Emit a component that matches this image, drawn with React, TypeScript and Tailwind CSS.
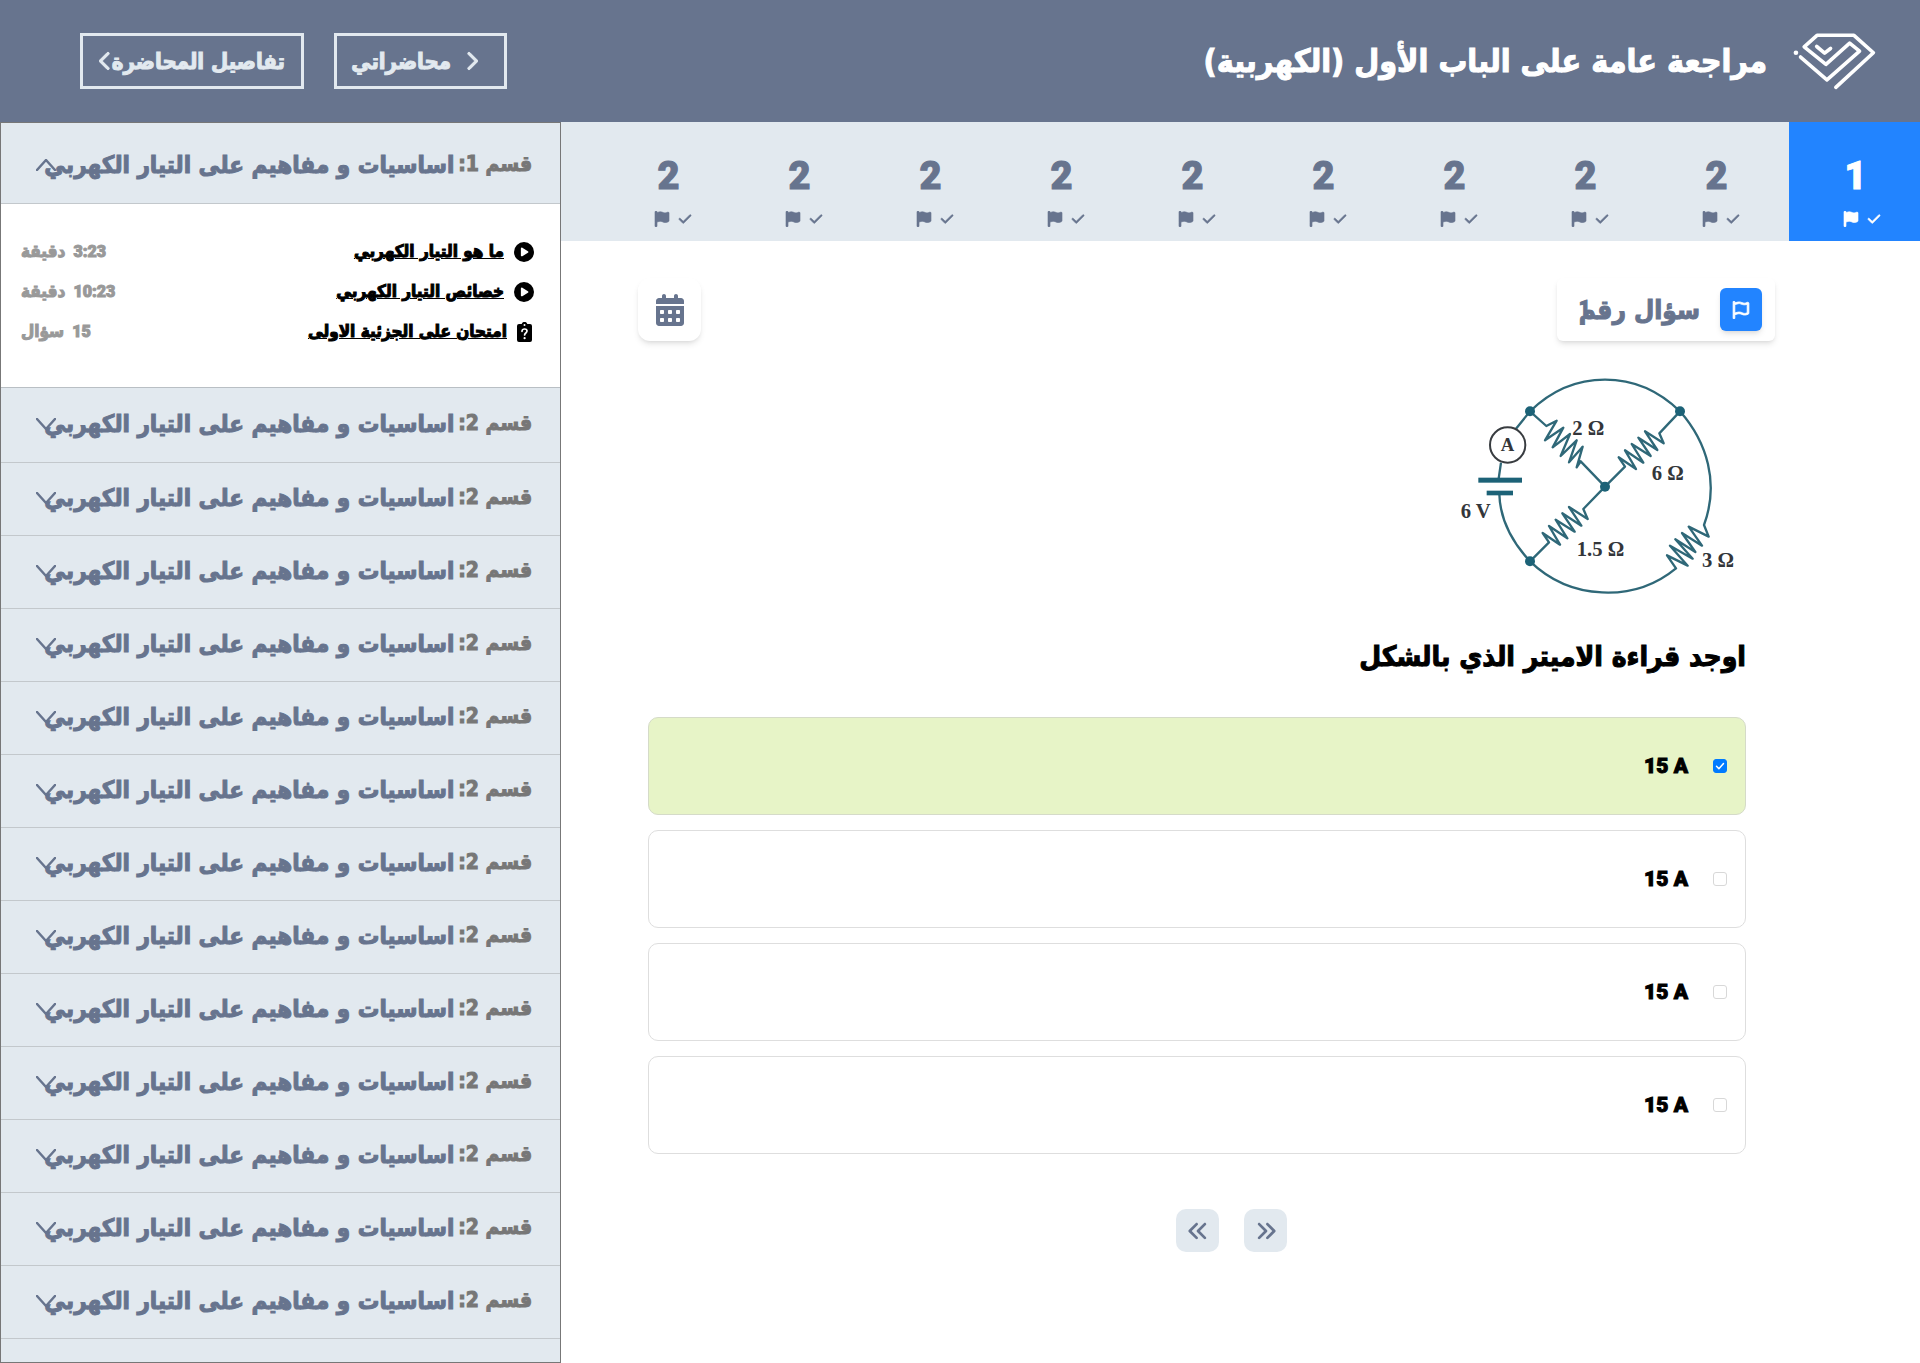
import { useState } from "react";
import {
  FaAnglesLeft,
  FaAnglesRight,
  FaCalendarDays,
  FaCheck,
  FaCirclePlay,
  FaFlag,
  FaRegFlag,
  FaChevronLeft,
  FaChevronRight,
} from "react-icons/fa6";

const questions = [1, 2, 2, 2, 2, 2, 2, 2, 2, 2];
const sections = [1, 2, 2, 2, 2, 2, 2, 2, 2, 2, 2, 2, 2, 2];
const answers = ["15 A", "15 A", "15 A", "15 A"];

const lessons = [
  { title: "ما هو التيار الكهربي", amount: "3:23", unit: "دقيقة", quiz: false },
  { title: "خصائص التيار الكهربي", amount: "10:23", unit: "دقيقة", quiz: false },
  { title: "امتحان على الجزئية الاولى", amount: "15", unit: "سؤال", quiz: true },
];

function Logo() {
  return (
    <svg viewBox="39 36 250 176" className="h-[58px] w-[83px]" fill="none" stroke="#fff" strokeWidth="11" strokeLinecap="round" strokeLinejoin="round" aria-hidden="true">
      <path d="M168 204 282 99 223 46H111L72 81l66 53 72-64 30 24-99 87-80-69" />
      <path d="m110 80 24 20 18-14" />
      <circle cx="47" cy="99" r="7" fill="#fff" stroke="none" />
    </svg>
  );
}

function QuizIcon() {
  return (
    <svg viewBox="0 0 15 20" className="mr-[2px] h-5 w-[15px]" aria-hidden="true">
      <path fill="#000" d="M2 2h2.700a2.900 2.900 0 0 1 5.600 0H13a2 2 0 0 1 2 2v14a2 2 0 0 1-2 2H2a2 2 0 0 1-2-2V4a2 2 0 0 1 2-2Z" />
      <circle cx="7.500" cy="3" r="1" fill="#fff" />
      <path d="M5 9.300C5 7.800 6 7 7.600 7 9 7 10 7.900 10 9.100c0 1.900-2.400 1.900-2.400 3.900" fill="none" stroke="#fff" strokeWidth="1.700" strokeLinecap="round" />
      <circle cx="7.600" cy="16.200" r="1.100" fill="#fff" />
    </svg>
  );
}

function Arrow({ up }: { up: boolean }) {
  return (
    <svg viewBox="0 0 20 12" className="h-3 w-5" fill="none" stroke="#67748e" strokeWidth="2.500" strokeLinecap="round" strokeLinejoin="round" aria-hidden="true">
      <path d={up ? "M1 11 10 1l9 10" : "M1 1l9 10 9-10"} />
    </svg>
  );
}

function Marks() {
  return (
    <span className="flex items-center gap-2 pt-[15px]">
      <FaCheck className="size-[14px]" stroke="currentColor" strokeWidth="20" />
      <FaFlag className="size-4" stroke="currentColor" strokeWidth="20" />
    </span>
  );
}

function Circuit() {
  return (
    <svg viewBox="96 354 882 651" className="h-[217px] w-[294px]" role="img" aria-label="دائرة كهربية">
      <g fill="none" stroke="#2f6878" strokeWidth="7" strokeLinejoin="round">
        <path d="M330 454C460 327 650 327 780 454 862 548 898 670 852 795L866 830 806 800 846 857 786 819 826 876 766 838 818 896 750 857 803 917 741 886 768 925C640 1030 450 1020 330 904 280 850 240 780 238 702" />
        <path d="m330 454-42 52M243 608l-7 48" />
        <path d="M330 454 379 498 410 482 375 541 430 503 398 562 450 522 422 588 470 541 447 607 488 560 470 622 482 604 555 680" />
        <path d="M780 454 718 520 731 550 675 514 712 570 655 533 692 588 635 552 670 608 615 571 648 627 596 592 615 620 555 680" />
        <path d="M555 680 490 747 503 777 447 741 484 797 427 760 464 815 407 779 442 835 387 798 420 854 368 819 387 847 330 904" />
      </g>
      <g fill="#1c6277">
        <rect x="175" y="653" width="131" height="15" />
        <rect x="200" y="692" width="79" height="14" />
        <circle cx="330" cy="454" r="15" />
        <circle cx="780" cy="454" r="15" />
        <circle cx="555" cy="680" r="15" />
        <circle cx="330" cy="904" r="15" />
      </g>
      <circle cx="263" cy="555" r="53" fill="#fff" stroke="#383c40" strokeWidth="6" />
      <g fill="#33363a" fontFamily="Liberation Serif, serif" fontWeight="700" fontSize="62" direction="ltr" className="[-webkit-text-stroke:0]">
        <text x="242" y="573" fontSize="56">A</text>
        <text x="457" y="526">2 Ω</text>
        <text x="695" y="660">6 Ω</text>
        <text x="122" y="774">6 V</text>
        <text x="470" y="888">1.5 Ω</text>
        <text x="846" y="920">3 Ω</text>
      </g>
    </svg>
  );
}

export default function App() {
  const [picked, setPicked] = useState([true, false, false, false]);
  const toggle = (i: number) => setPicked(picked.map((v, n) => (n === i ? !v : v)));

  return (
    <div dir="rtl" className="flex h-screen flex-col overflow-hidden bg-white font-['DejaVu_Sans_Condensed','DejaVu_Sans',sans-serif] font-bold text-black [-webkit-text-stroke:1px]">
      <header className="flex h-[122px] shrink-0 items-center justify-between bg-[#67748e] pr-11 pl-20">
        <div className="flex items-center gap-[26px]">
          <Logo />
          <h1 className="text-[32px] leading-10 text-white">مراجعة عامة على الباب الأول (الكهربية)</h1>
        </div>
        <nav className="flex gap-[30px] text-[22px] whitespace-nowrap text-[#e2e9ef]">
          <a href="#lectures" className="flex h-14 w-[173px] items-center gap-[14px] border-3 border-[#e2e9ef] pr-[26px]">
            <FaChevronRight className="h-5 w-[13px]" stroke="currentColor" strokeWidth="24" />
            محاضراتي
          </a>
          <a href="#details" className="flex h-14 w-[224px] items-center border-3 border-[#e2e9ef] pr-4">
            تفاصيل المحاضرة
            <FaChevronLeft className="h-5 w-[13px] shrink-0" stroke="currentColor" strokeWidth="24" />
          </a>
        </nav>
      </header>

      <div className="flex min-h-0 flex-1">
        <main className="min-w-0 flex-1">
          <div className="flex gap-[10px] bg-[#e2e9ef] pl-[39px]">
            <button type="button" className="flex h-[119px] w-[131px] shrink-0 flex-col items-center bg-[#2284ff] pt-[34px] pl-[14px] text-white">
              <span className="pr-3 font-[Roboto] text-[38px] leading-10 font-black">{questions[0]}</span>
              <Marks />
            </button>
            <div className="grid flex-1 grid-cols-9">
              {questions.slice(1).map((n, i) => (
                <button key={i} type="button" className="flex h-[119px] flex-col items-center pt-[34px] pl-[14px] text-[#67748e]">
                  <span className="pr-2 font-[Roboto] text-[38px] leading-10 font-black">{n}</span>
                  <Marks />
                </button>
              ))}
            </div>
          </div>

          <div className="flex justify-between pt-[37px] pr-[145px] pl-[77px]">
            <div className="flex h-[63px] w-[218px] items-center gap-5 rounded-md bg-white pr-[13px] shadow-md">
              <button type="button" aria-label="تمييز السؤال" className="flex h-[43px] w-[42px] items-center justify-center rounded-md bg-[#2284ff] text-white shadow-md">
                <FaRegFlag className="size-[18px]" stroke="currentColor" strokeWidth="24" />
              </button>
              <h2 className="relative text-[26px] leading-9 text-[#67748e]">
                سؤال رقم
                <span className="absolute top-0 left-0 font-[Roboto] text-xl leading-8 font-black">1</span>
              </h2>
            </div>
            <button type="button" aria-label="التقويم" className="flex size-[63px] items-center justify-center rounded-xl bg-white text-[#67748e] shadow-md">
              <FaCalendarDays className="h-8 w-7" />
            </button>
          </div>

          <div className="pt-[37px] pr-[174px] pl-[87px]">
            <Circuit />
            <p className="pt-10 text-[28px] leading-[44px]">اوجد قراءة الاميتر الذي بالشكل</p>
            <div className="flex flex-col gap-[15px] pt-[38px]">
              {answers.map((a, i) => (
                <label key={i} className={picked[i] ? "flex h-[98px] items-center gap-[25px] rounded-[10px] border border-[#d5dbc8] bg-[#e7f4c7] pr-[18px]" : "flex h-[98px] items-center gap-[25px] rounded-[10px] border border-[#dedede] pr-[18px]"}>
                  <span className="relative flex size-[14px]">
                    <input type="checkbox" checked={picked[i]} onChange={() => toggle(i)} className="size-[14px] appearance-none rounded-[3px] border border-[#d8d8d8] bg-white checked:border-[#007aff] checked:bg-[#007aff]" />
                    {picked[i] && (
                      <svg viewBox="0 0 14 14" className="pointer-events-none absolute inset-0" fill="none" stroke="#fff" strokeWidth="1.500" strokeLinecap="round" strokeLinejoin="round" aria-hidden="true">
                        <path d="m3.500 7.300 2.400 2.500 4.600-5.300" />
                      </svg>
                    )}
                  </span>
                  <span dir="ltr" className="pt-[2px] font-[Roboto] text-[21px] font-black">{a}</span>
                </label>
              ))}
            </div>
          </div>

          <div className="flex justify-center gap-[25px] pt-[55px] pr-[18px]">
            <button type="button" aria-label="السابق" className="flex size-[43px] items-center justify-center rounded-[10px] bg-[#e2e9ef] text-[#67748e]">
              <FaAnglesRight className="size-[22px]" />
            </button>
            <button type="button" aria-label="التالي" className="flex size-[43px] items-center justify-center rounded-[10px] bg-[#e2e9ef] text-[#67748e]">
              <FaAnglesLeft className="size-[22px]" />
            </button>
          </div>
        </main>

        <aside className="w-[561px] shrink-0 overflow-hidden border border-[#777] bg-[#e2e9ef]">
          {sections.map((n, i) => (
            <section key={i}>
              <button
                type="button"
                className={
                  i === 0
                    ? "relative flex h-[81px] w-full items-center border-b border-[#c3c8cc] pt-1 pr-7"
                    : i === 1
                      ? "relative flex h-[75px] w-full items-center border-b border-[#c3c8cc] pr-7 pb-[2px]"
                      : "relative flex h-[73px] w-full items-center border-b border-[#c3c8cc] pr-7 pb-[2px]"
                }
              >
                <span className="text-[21px] text-[#777]">قسم {n}:</span>
                <span className="pr-1 text-2xl whitespace-nowrap text-[#67748e]">اساسيات و مفاهيم على التيار الكهربي</span>
                <span className="absolute left-[35px]">
                  <Arrow up={i === 0} />
                </span>
              </button>
              {i === 0 && (
                <ul className="flex h-[184px] flex-col gap-5 border-b border-[#b9bfc4] bg-white pt-[38px] pr-[26px] pl-5 text-[17px]">
                  {lessons.map((l) => (
                    <li key={l.title} className="flex h-5 items-center justify-between">
                      <a href="#lesson" className="flex items-center gap-[10px] underline">
                        {l.quiz ? <QuizIcon /> : <FaCirclePlay className="size-5" />}
                        {l.title}
                      </a>
                      <span className="flex items-center gap-2 text-[#999]">
                        <span className="font-[Roboto] text-base font-black">{l.amount}</span>
                        <span>{l.unit}</span>
                      </span>
                    </li>
                  ))}
                </ul>
              )}
            </section>
          ))}
        </aside>
      </div>
    </div>
  );
}
